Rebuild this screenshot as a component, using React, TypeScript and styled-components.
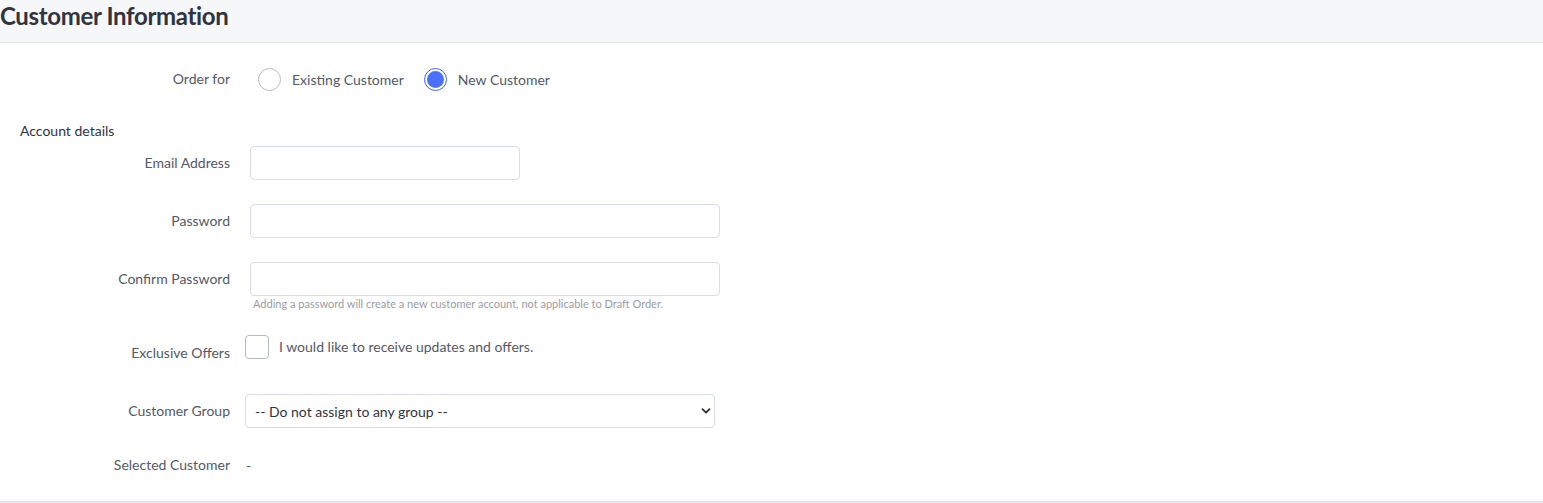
import React from 'react';
import styled, { createGlobalStyle } from 'styled-components';

const GlobalStyle = createGlobalStyle`
  html, body {
    margin: 0;
    padding: 0;
    background: #fff;
    font-family: Lato, "Open Sans", sans-serif;
    color: #545964;
  }
`;

const Page = styled.div`
  width: 1543px;
  height: 503px;
  display: flex;
  flex-direction: column;
  overflow: hidden;
`;

const Header = styled.div`
  height: 43px;
  box-sizing: border-box;
  background: #f5f7f9;
  border-bottom: 1px solid #dde1e6;
  display: flex;
  align-items: center;
  padding-bottom: 11px;
`;

const Title = styled.h1`
  margin: 0;
  font-size: 24px;
  font-weight: 700;
  color: #313440;
  letter-spacing: -0.35px;
`;

const Body = styled.div`
  flex: 1;
  border-bottom: 2px solid #e6e7ec;
  padding-top: 19px;
  display: flex;
  flex-direction: column;
`;

const Row = styled.div<{ $mt?: number; $h?: number; $top?: boolean }>`
  display: grid;
  grid-template-columns: 230px 1fr;
  align-items: ${(p) => (p.$top ? 'start' : 'center')};
  margin-top: ${(p) => p.$mt ?? 0}px;
  min-height: ${(p) => p.$h ?? 34}px;
`;

const Label = styled.div<{ $pt?: number }>`
  text-align: right;
  font-size: 14px;
  line-height: 16px;
  color: #545964;
  padding-top: ${(p) => p.$pt ?? 0}px;
`;

const Control = styled.div<{ $offset?: number }>`
  padding-left: ${(p) => p.$offset ?? 20}px;
  display: flex;
  flex-direction: column;
`;

const Section = styled.div`
  margin-top: 26px;
  padding-left: 20px;
  font-size: 14px;
  line-height: 17px;
  color: #313440;
`;

const RadioGroup = styled.div`
  display: flex;
  align-items: center;
  padding-left: 8px;
`;

const RadioLabel = styled.label`
  display: flex;
  align-items: center;
  font-size: 14px;
  color: #545964;
  margin-right: 20px;
`;

const RadioCircle = styled.span<{ $checked?: boolean }>`
  width: 23px;
  height: 23px;
  border-radius: 50%;
  box-sizing: border-box;
  border: 1px solid ${(p) => (p.$checked ? '#3c64f4' : '#b4bac4')};
  display: flex;
  align-items: center;
  justify-content: center;
  margin-right: 11px;
  &::after {
    content: '';
    display: ${(p) => (p.$checked ? 'block' : 'none')};
    width: 17px;
    height: 17px;
    border-radius: 50%;
    background: #4b71fc;
  }
`;

const Input = styled.input<{ $w: number }>`
  width: ${(p) => p.$w}px;
  height: 34px;
  box-sizing: border-box;
  border: 1px solid #d9dce9;
  border-radius: 4px;
  background: #fff;
  font-family: inherit;
  font-size: 14px;
  padding: 0 10px;
  outline: none;
`;

const Hint = styled.div`
  font-size: 11px;
  line-height: 13px;
  color: #999da4;
  margin-top: 1px;
  padding-left: 3px;
`;

const CheckRow = styled.label`
  display: flex;
  align-items: flex-start;
  font-size: 14px;
  color: #545964;
`;

const CheckBox = styled.span`
  width: 24px;
  height: 24px;
  box-sizing: border-box;
  border: 1px solid #b4bac4;
  border-radius: 4px;
  margin-right: 10px;
  flex: none;
`;

const CheckText = styled.span`
  line-height: 24px;
`;

const SelectBox = styled.div`
  width: 470px;
  height: 34px;
  box-sizing: border-box;
  border: 1px solid #d9dce9;
  border-radius: 4px;
  display: flex;
  align-items: center;
  justify-content: space-between;
  padding: 0 3px 0 9px;
  font-size: 14px;
  color: #313440;
`;

const Value = styled.div`
  padding-left: 16px;
  font-size: 14px;
  color: #545964;
`;

const Chevron = () => (
  <svg width="10" height="10" viewBox="0 0 10 10">
    <path d="M1.5 3.2 5 6.7 8.5 3.2" fill="none" stroke="#313440" strokeWidth="1.9" strokeLinecap="round" strokeLinejoin="round" />
  </svg>
);

export default function App() {
  return (
    <>
      <GlobalStyle />
      <Page>
        <Header>
          <Title>Customer Information</Title>
        </Header>
        <Body>
          <Row>
            <Label>Order for</Label>
            <Control>
              <RadioGroup>
                <RadioLabel>
                  <RadioCircle />
                  Existing Customer
                </RadioLabel>
                <RadioLabel>
                  <RadioCircle $checked />
                  New Customer
                </RadioLabel>
              </RadioGroup>
            </Control>
          </Row>
          <Section>Account details</Section>
          <Row $mt={7}>
            <Label>Email Address</Label>
            <Control>
              <Input $w={270} type="text" />
            </Control>
          </Row>
          <Row $mt={24}>
            <Label>Password</Label>
            <Control>
              <Input $w={470} type="password" />
            </Control>
          </Row>
          <Row $mt={24}>
            <Label>Confirm Password</Label>
            <Control>
              <Input $w={470} type="password" />
            </Control>
          </Row>
          <Row $h={0}>
            <div />
            <Control>
              <Hint>Adding a password will create a new customer account, not applicable to Draft Order.</Hint>
            </Control>
          </Row>
          <Row $mt={25} $h={24} $top>
            <Label $pt={10}>Exclusive Offers</Label>
            <Control $offset={15}>
              <CheckRow>
                <CheckBox />
                <CheckText>I would like to receive updates and offers.</CheckText>
              </CheckRow>
            </Control>
          </Row>
          <Row $mt={33}>
            <Label>Customer Group</Label>
            <Control $offset={15}>
              <SelectBox>
                <span>-- Do not assign to any group --</span>
                <Chevron />
              </SelectBox>
            </Control>
          </Row>
          <Row $mt={20}>
            <Label>Selected Customer</Label>
            <Value>-</Value>
          </Row>
        </Body>
      </Page>
    </>
  );
}
